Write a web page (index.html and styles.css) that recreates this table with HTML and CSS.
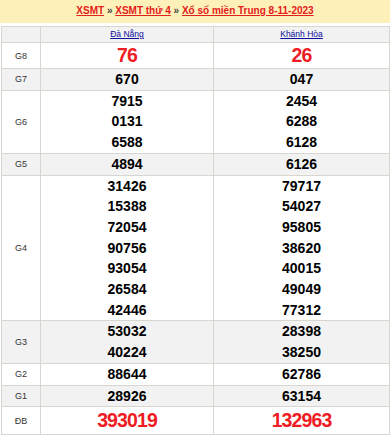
FILE: index.html
```html
<!DOCTYPE html>
<html lang="vi">
<head>
<meta charset="utf-8">
<title>XSMT 8-11-2023</title>
<link rel="stylesheet" href="styles.css">
</head>
<body>
<div class="wrap">
  <div class="crumb">
    <a href="#">XSMT</a> <span class="sep">»</span> <a href="#">XSMT thứ 4</a> <span class="sep">»</span> <a href="#">Xổ số miền Trung 8-11-2023</a>
  </div>
  <table class="kq">
    <colgroup><col class="c1"><col class="c2"><col class="c3"></colgroup>
    <tr class="head">
      <td></td>
      <td><a href="#">Đà Nẵng</a></td>
      <td><a href="#">Khánh Hòa</a></td>
    </tr>
    <tr class="g8">
      <td class="lbl">G8</td>
      <td><div class="big">76</div></td>
      <td><div class="big">26</div></td>
    </tr>
    <tr class="alt">
      <td class="lbl">G7</td>
      <td><div class="n">670</div></td>
      <td><div class="n">047</div></td>
    </tr>
    <tr>
      <td class="lbl">G6</td>
      <td><div class="n">7915</div><div class="n">0131</div><div class="n">6588</div></td>
      <td><div class="n">2454</div><div class="n">6288</div><div class="n">6128</div></td>
    </tr>
    <tr class="alt">
      <td class="lbl">G5</td>
      <td><div class="n">4894</div></td>
      <td><div class="n">6126</div></td>
    </tr>
    <tr>
      <td class="lbl">G4</td>
      <td><div class="n">31426</div><div class="n">15388</div><div class="n">72054</div><div class="n">90756</div><div class="n">93054</div><div class="n">26584</div><div class="n">42446</div></td>
      <td><div class="n">79717</div><div class="n">54027</div><div class="n">95805</div><div class="n">38620</div><div class="n">40015</div><div class="n">49049</div><div class="n">77312</div></td>
    </tr>
    <tr class="alt">
      <td class="lbl">G3</td>
      <td><div class="n">53032</div><div class="n">40224</div></td>
      <td><div class="n">28398</div><div class="n">38250</div></td>
    </tr>
    <tr>
      <td class="lbl">G2</td>
      <td><div class="n">88644</div></td>
      <td><div class="n">62786</div></td>
    </tr>
    <tr class="alt">
      <td class="lbl">G1</td>
      <td><div class="n">28926</div></td>
      <td><div class="n">63154</div></td>
    </tr>
    <tr class="db">
      <td class="lbl">ĐB</td>
      <td><div class="big">393019</div></td>
      <td><div class="big">132963</div></td>
    </tr>
  </table>
</div>
</body>
</html>
```
FILE: styles.css
```css
html, body {
  margin: 0;
  padding: 0;
  background: #fff;
}
body {
  font-family: "Liberation Sans", Arial, sans-serif;
  color: #000;
}
.wrap {
  width: 390px;
  border-bottom: 2px solid #f2a654;
  padding-bottom: 1px;
}
.crumb {
  background: #fdf0b8;
  height: 23px;
  line-height: 22px;
  text-align: center;
  font-size: 10px;
  font-weight: bold;
  color: #444;
}
.crumb a {
  color: #e3201b;
  text-decoration: underline;
}
.crumb .sep {
  color: #444;
}
.kq {
  margin: 3px 1px 0 1px;
  width: 388px;
  border-collapse: collapse;
  table-layout: fixed;
}
.kq col.c1 { width: 39px; }
.kq col.c2 { width: 173px; }
.kq col.c3 { width: 176px; }
.kq td {
  border: 1px solid #d9d5cf;
  padding: 0;
  text-align: center;
  vertical-align: middle;
}
.kq tr.head td {
  background: #f2f2f2;
  height: 15px;
  line-height: 15px;
  font-size: 8.5px;
}
.kq tr.head a {
  color: #0a0a9c;
  text-decoration: underline;
}
.kq tr.alt td {
  background: #f2f2f2;
}
.kq td.lbl {
  font-size: 9px;
  color: #333;
}
.n {
  font-size: 14px;
  font-weight: bold;
  line-height: 20.7px;
  color: #000;
}
.big {
  font-size: 19.5px;
  font-weight: bold;
  letter-spacing: -0.9px;
  color: #ee1c25;
}
.g8 .big {
  line-height: 25px;
}
.db .big {
  line-height: 27px;
}
```
